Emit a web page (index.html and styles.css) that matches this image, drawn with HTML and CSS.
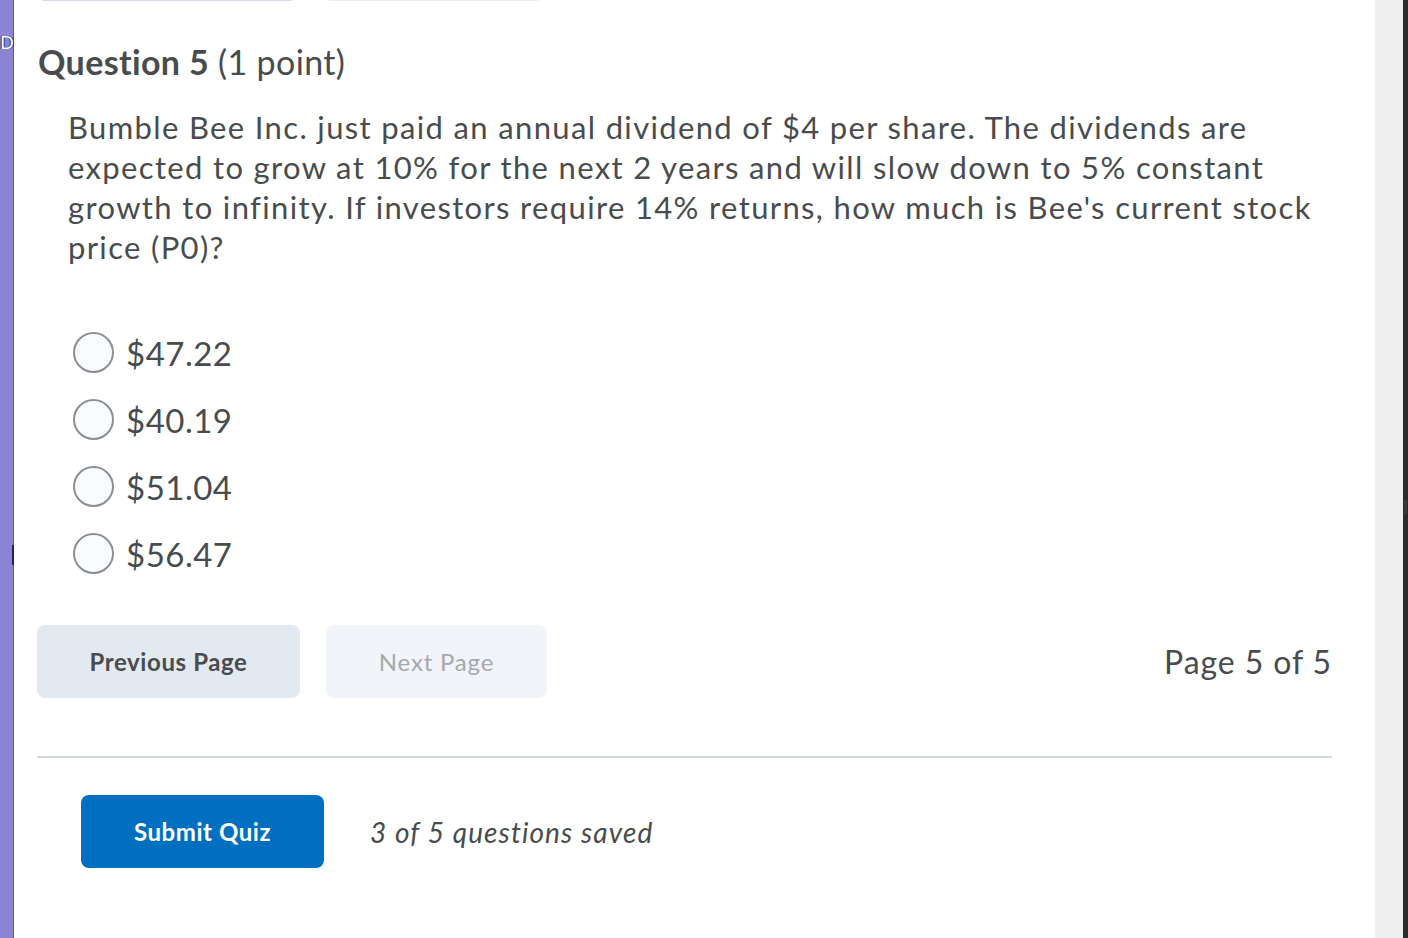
FILE: index.html
```html
<!DOCTYPE html>
<html lang="en">
<head>
    <meta charset="UTF-8">
    <meta name="viewport" content="width=device-width, initial-scale=1.0">
    <title>Quiz - Question 5</title>
    <link rel="stylesheet" href="styles.css">
</head>
<body>
    <div class="frame">
        <div class="side-strip"><span class="side-letter">D</span><span class="side-mark"></span></div>

        <main class="quiz">
            <!-- edges of the buttons scrolled out above -->
            <div class="top-edges">
                <span class="edge edge-prev"></span>
                <span class="edge edge-next"></span>
            </div>

            <h2 class="q-title"><strong>Question 5</strong> (1 point)</h2>

            <p class="q-text">Bumble Bee Inc. just paid an annual dividend of $4 per share. The dividends are expected to grow at 10% for the next 2 years and will slow down to 5% constant growth to infinity. If investors require 14% returns, how much is Bee's current stock price (P0)?</p>

            <ul class="choices">
                <li><label><span class="radio"></span>$47.22</label></li>
                <li><label><span class="radio"></span>$40.19</label></li>
                <li><label><span class="radio"></span>$51.04</label></li>
                <li><label><span class="radio"></span>$56.47</label></li>
            </ul>

            <div class="pager">
                <button class="btn btn-prev">Previous Page</button>
                <button class="btn btn-next" disabled>Next Page</button>
                <span class="page-count">Page 5 of 5</span>
            </div>

            <hr class="divider">

            <div class="submit-row">
                <button class="btn btn-submit">Submit Quiz</button>
                <span class="saved">3 of 5 questions saved</span>
            </div>
        </main>

        <div class="scroll-gutter"><span class="scroll-bar"></span></div>
    </div>
</body>
</html>
```

FILE: styles.css
```css
body {
    margin: 0;
    font-family: Lato, 'Liberation Sans', Arial, sans-serif;
    color: #494c4e;
    background-color: #fff;
    overflow: hidden;
}
.frame {
    display: flex;
    height: 938px;
}
.side-strip {
    position: relative;
    width: 13px;
    background-color: #8b84d3;
    border-right: 1px solid #5b5596;
    flex-shrink: 0;
}
.side-letter {
    position: absolute;
    top: 33px;
    left: 0;
    font-family: 'DejaVu Sans', sans-serif;
    font-size: 18px;
    line-height: 20px;
    color: #fff;
    text-shadow: 1px 0 0 #203070, -1px 0 0 #203070;
}
.side-mark {
    position: absolute;
    top: 545px;
    left: 12px;
    width: 2px;
    height: 20px;
    background-color: #1c2266;
}
.quiz {
    flex: 1;
    padding: 0 43px 0 23px;
}
.top-edges {
    display: flex;
    height: 2px;
}
.edge {
    display: block;
    height: 1px;
    border-radius: 0 0 6px 6px;
}
.edge-prev {
    width: 250px;
    margin-left: 5px;
    background-color: #d6dde8;
}
.edge-next {
    width: 210px;
    margin-left: 37px;
    background-color: #e9edf3;
}
.q-title {
    margin: 38px 0 0 1px;
    font-size: 34px;
    font-weight: normal;
    line-height: 44px;
    letter-spacing: 0.35px;
}
.q-title strong {
    font-weight: bold;
}
.q-text {
    margin: 23px 0 0 31px;
    font-size: 31px;
    line-height: 40px;
    letter-spacing: 1.35px;
    max-width: 1264px;
}
.choices {
    list-style: none;
    margin: 52px 0 0 36px;
    padding: 0;
}
.choices li {
    height: 67px;
    display: flex;
    align-items: center;
}
.choices label {
    display: flex;
    align-items: center;
    font-size: 33px;
    letter-spacing: 0.5px;
}
.radio {
    display: inline-block;
    width: 41px;
    height: 41px;
    border: 2px solid #8b8f93;
    border-radius: 50%;
    background-color: #f9fbff;
    box-sizing: border-box;
    margin-right: 12px;
}
.pager {
    display: flex;
    align-items: center;
    margin-top: 38px;
}
.btn {
    font-family: Lato, 'Liberation Sans', Arial, sans-serif;
    font-size: 24px;
    font-weight: bold;
    height: 73px;
    border: none;
    border-radius: 8px;
    cursor: pointer;
}
.btn-prev {
    width: 263px;
    background-color: #e3e9f1;
    color: #494c4e;
    letter-spacing: 0.6px;
}
.btn-next {
    width: 221px;
    margin-left: 26px;
    background-color: #f1f4f8;
    color: #a6a9ac;
    font-weight: normal;
    letter-spacing: 0.8px;
    cursor: default;
}
.page-count {
    margin-left: auto;
    font-size: 32px;
    letter-spacing: 0.9px;
}
.divider {
    border: none;
    border-top: 2px solid #d3d9e3;
    margin: 58px 0 0 0;
}
.submit-row {
    display: flex;
    align-items: center;
    margin: 37px 0 0 44px;
}
.btn-submit {
    width: 243px;
    background-color: #006fbf;
    color: #fff;
    letter-spacing: 0.55px;
}
.saved {
    margin-left: 46px;
    font-size: 28px;
    font-style: italic;
    letter-spacing: 1.1px;
}
.scroll-gutter {
    width: 28px;
    background-color: #efefef;
    border-right: 5px solid #2b2b2b;
    flex-shrink: 0;
    position: relative;
}
.scroll-bar {
    position: absolute;
    top: 500px;
    right: -4px;
    width: 3px;
    height: 14px;
    background-color: #3a3a3a;
}
```
